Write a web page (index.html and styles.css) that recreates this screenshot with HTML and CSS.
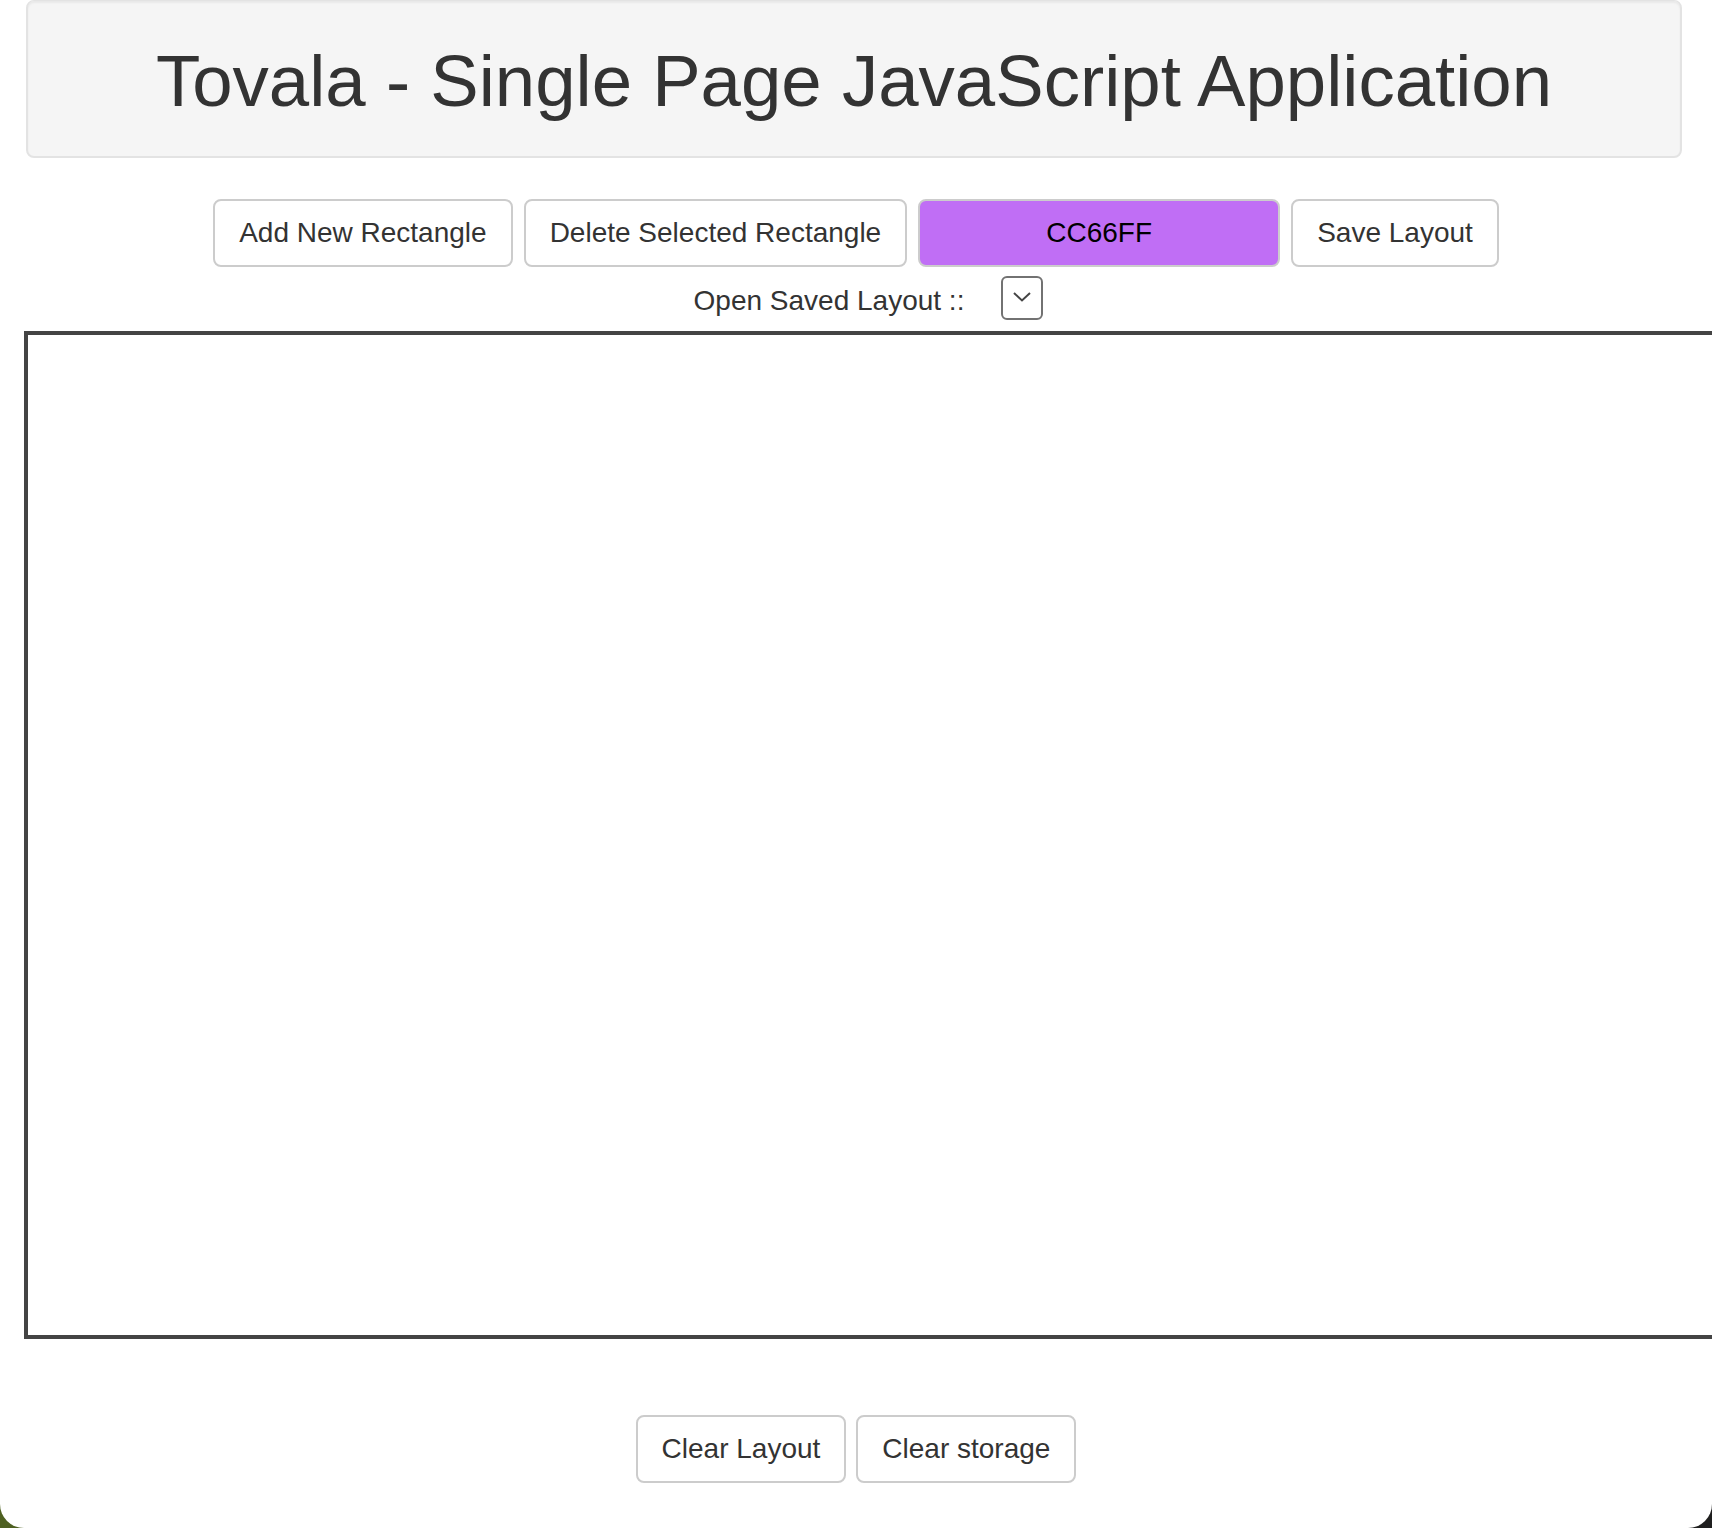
FILE: index.html
```html
<!DOCTYPE html>
<html lang="en">
<head>
<meta charset="utf-8">
<title>Tovala - Single Page JavaScript Application</title>
<link rel="stylesheet" href="styles.css">
</head>
<body>
<div class="window">
  <div class="well">
    <h1 class="title">Tovala - Single Page JavaScript Application</h1>
  </div>
  <div class="toolbar">
    <button class="btn">Add New Rectangle</button>
    <button class="btn">Delete Selected Rectangle</button>
    <button class="btn btn-color">CC66FF</button>
    <button class="btn">Save Layout</button>
  </div>
  <div class="open-row">
    <span class="open-label">Open Saved Layout ::</span>
    <div class="select">
      <svg width="20" height="12" viewBox="0 0 20 12"><path d="M2 2 L10 9.5 L18 2" fill="none" stroke="#444" stroke-width="2"/></svg>
    </div>
  </div>
  <div class="canvas"></div>
  <div class="footer-bar">
    <button class="btn">Clear Layout</button>
    <button class="btn">Clear storage</button>
  </div>
</div>
</body>
</html>
```

FILE: styles.css
```css
html {
  margin: 0;
  height: 100%;
  overflow: hidden;
  background: linear-gradient(to right, #4e6021 0%, #3a4a1c 40%, #1f1f1f 100%);
}
body {
  margin: 0;
  overflow: hidden;
  font-family: "Liberation Sans", Arial, Helvetica, sans-serif;
  color: #333;
}
.window {
  background: #fff;
  height: 1528px;
  border-radius: 0 0 24px 24px;
  overflow: hidden;
  box-sizing: border-box;
}
.well {
  margin: 0 30px 0 26px;
  background: #f5f5f5;
  border: 2px solid #e3e3e3;
  border-top-width: 1px;
  border-radius: 8px;
  box-shadow: inset 0 2px 2px rgba(0,0,0,0.05);
  padding: 40px 0 35px;
  text-align: center;
}
.title {
  margin: 0;
  font-size: 72.6px;
  line-height: 80px;
  font-weight: 400;
  color: #333;
}
.toolbar {
  display: flex;
  justify-content: center;
  gap: 11px;
  margin-top: 41px;
  padding-left: 0;
}
.btn {
  height: 68px;
  padding: 0 24px;
  background: #fff;
  border: 2px solid #ccc;
  border-radius: 8px;
  font-family: "Liberation Sans", Arial, Helvetica, sans-serif;
  font-size: 28px;
  color: #333;
  line-height: 1;
  cursor: pointer;
}
.btn-color {
  width: 362px;
  background: #c06ef5;
  color: #000;
}
.open-row {
  display: flex;
  justify-content: center;
  align-items: flex-start;
  padding-top: 9px;
  padding-left: 25px;
}
.open-label {
  font-size: 28px;
  line-height: 40px;
  margin-top: 5px;
  margin-right: 37px;
  color: #333;
}
.select {
  width: 42px;
  height: 44px;
  box-sizing: border-box;
  border: 2px solid #727272;
  border-radius: 6px;
  display: flex;
  align-items: center;
  justify-content: center;
  padding-bottom: 2px;
}
.canvas {
  margin-top: 10px;
  margin-left: 24px;
  width: 1720px;
  height: 1000px;
  border: 4px solid #444;
  background: #fff;
}
.footer-bar {
  display: flex;
  justify-content: center;
  gap: 10px;
  margin-top: 76px;
}
```
